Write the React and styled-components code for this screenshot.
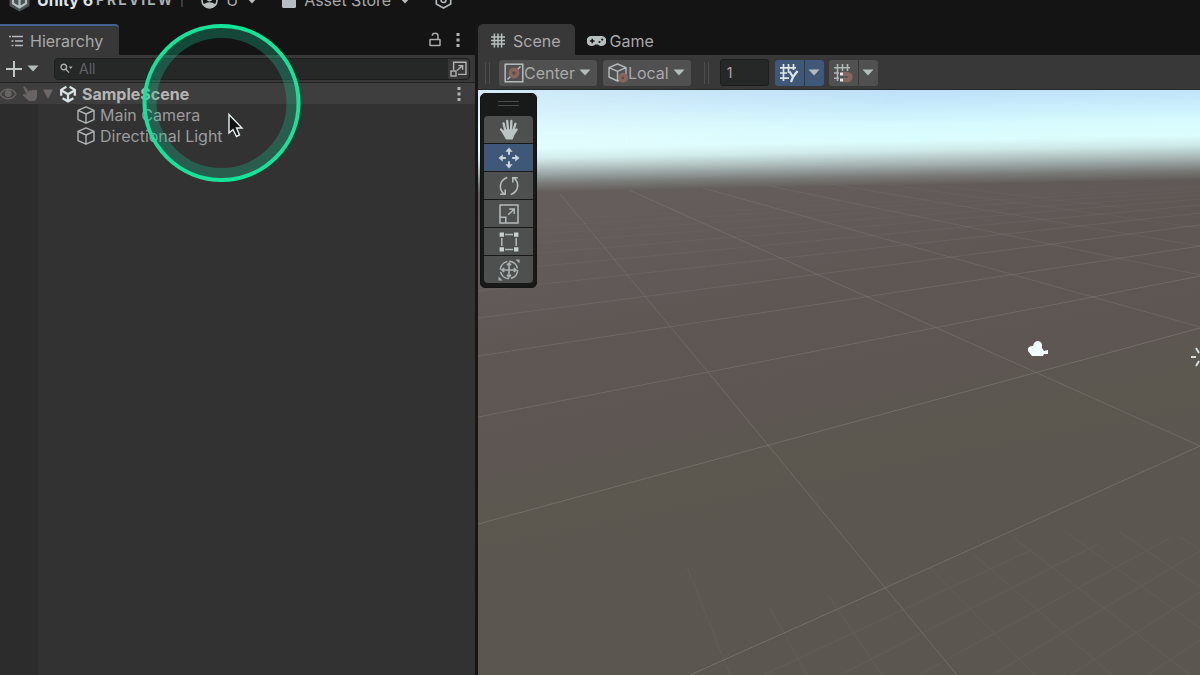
import React, { useState } from 'react';
import styled, { createGlobalStyle } from 'styled-components';

const GlobalStyle = createGlobalStyle`
	* {
		box-sizing: border-box;
	}

	body {
		margin: 0;
		background: #141414;
		color: #a9a9a9;
		font-family: Inter, 'Liberation Sans', sans-serif;
		font-size: 16px;
		line-height: 20px;
		overflow: hidden;
	}

	button, input, select {
		font: inherit;
		color: inherit;
		border: none;
		outline: none;
		padding: 0;
		margin: 0;
		background: none;
	}

	svg {
		display: block;
		flex: none;
	}
`;

const Editor = styled.div`
	display: flex;
	flex-direction: column;
	min-height: 100vh;
	position: relative;
`;

const TopBar = styled.header`
	display: flex;
	align-items: center;
	height: 36px;
	margin-top: -12px;
	padding: 0 8px 12px;
	background: #141414;
`;

const Brand = styled.span`
	margin-left: 6px;
	font-weight: 700;
	color: #dfe5e5;
`;

const Channel = styled.span`
	margin-left: 3px;
	font-size: 14px;
	font-weight: 700;
	letter-spacing: 2px;
	color: #a9b0b0;
`;

const Divider = styled.span`
	width: 2px;
	height: 14px;
	margin: 0 18px 0 7px;
	background: #3c3c3c;
`;

const TopButton = styled.button`
	display: flex;
	align-items: center;
	gap: 8px;
	margin-right: 24px;
`;

const Panels = styled.main`
	flex: 1;
	display: grid;
	grid-template-columns: 478px 1fr;
`;

const Panel = styled.section`
	display: flex;
	flex-direction: column;
	min-width: 0;
`;

const HierarchyPanel = styled(Panel)`
	border-right: 3px solid #161616;
`;

const TabBar = styled.div`
	display: flex;
	align-items: stretch;
	height: 31px;
`;

const Tab = styled.button`
	display: flex;
	align-items: center;
	gap: ${(props) => (props.$focused ? 6 : 8)}px;
	padding: 0 ${(props) => (props.$focused ? 16 : 14)}px 0 ${(props) => (props.$focused ? 9 : 13)}px;
	border-top: 2px solid ${(props) => (props.$focused ? '#42618c' : 'transparent')};
	border-radius: ${(props) => (props.$focused ? '0 4px 0 0' : '5px 5px 0 0')};
	background: ${(props) => (props.$active ? '#383838' : 'transparent')};
`;

const PlainTab = styled(Tab)`
	gap: 4px;
	padding: 0 12px;
`;

const TabActions = styled.div`
	display: flex;
	align-items: center;
	gap: 15px;
	margin-left: auto;
	padding-right: 15px;
`;

const IconButton = styled.button`
	display: flex;
	align-items: center;
	gap: 4px;
`;

const HierarchyTools = styled.div`
	display: flex;
	align-items: center;
	gap: 15px;
	height: 28px;
	padding: 0 5px;
	background: #383838;
	border-bottom: 1px solid #222222;
`;

const SearchBox = styled.div`
	flex: 1;
	display: flex;
	align-items: center;
	height: 22px;
	border: 1px solid #1e1e1e;
	border-radius: 4px;
	background: #262827;
`;

const SearchLabel = styled.label`
	flex: 1;
	display: flex;
	align-items: center;
	gap: 6px;
	padding-left: 5px;

	input {
		flex: 1;
		min-width: 0;
		font-size: 14px;
	}

	input::placeholder {
		color: #636363;
		opacity: 1;
	}
`;

const PickerButton = styled(IconButton)`
	justify-content: center;
	width: 21px;
	height: 20px;
	border-radius: 0 4px 4px 0;
	background: #383838;
`;

const Tree = styled.ul`
	flex: 1;
	margin: 0;
	padding: 0;
	list-style: none;
	background: linear-gradient(90deg, #2c2c2c 38px, #323232 38px);
`;

const SceneRow = styled.li`
	display: flex;
	align-items: center;
	height: 21px;
	padding-right: 14px;
	background: #3e3e3e;
	font-weight: 700;
	color: #b5b5b5;
`;

const RowToggles = styled.div`
	display: flex;
	align-items: center;
	gap: 5px;
	margin-right: 6px;
`;

const RowName = styled.span`
	flex: 1;
	margin-left: 5px;
`;

const ObjectRow = styled.li`
	display: flex;
	align-items: center;
	height: 21px;
	padding-left: 77px;
	color: #9c9c9c;
`;

const SceneTools = styled.div`
	display: flex;
	align-items: center;
	height: 35px;
	padding: 1px 7px 0;
	background: #383838;
	border-bottom: 1px solid #26292a;
`;

const Grip = styled.span`
	width: 5px;
	height: 22px;
	margin-right: ${(props) => props.$after}px;
	border: 1px solid #4c4c4c;
	border-width: 0 1px;
`;

const SelectBox = styled.label`
	display: flex;
	align-items: center;
	height: 26px;
	margin-right: ${(props) => props.$after}px;
	padding: 0 6px 0 5px;
	border-radius: 3px;
	background: #4f504f;

	select {
		appearance: none;
		field-sizing: content;
		margin-right: 4px;
	}
`;

const SizeInput = styled.input`
	width: 49px;
	height: 27px;
	margin-right: 6px;
	padding: 0 6px;
	border: 1px solid #1c1c1c;
	border-radius: 3px;
	background: #262827;
	font-size: 14px;
`;

const SplitButton = styled.div`
	display: flex;
	gap: 1px;
	height: 26px;
	margin-right: 5px;

	button {
		display: grid;
		place-items: center;
		width: 19px;
		border-radius: 0 3px 3px 0;
		background: ${(props) => (props.$on ? '#3f5878' : '#4f504f')};
	}

	button:first-child {
		width: 29px;
		border-radius: 3px 0 0 3px;
	}
`;

const Viewport = styled.div`
	position: relative;
	flex: 1;
	overflow: hidden;
	background: #5c5750;
`;

const WorldCanvas = styled.svg`
	position: absolute;
	inset: 0;
	width: 100%;
	height: 100%;
`;

const ToolPalette = styled.div`
	position: absolute;
	left: 2px;
	top: 3px;
	display: flex;
	flex-direction: column;
	align-items: center;
	gap: 1px;
	padding: 0 3px 4px;
	border: 1px solid #141414;
	border-radius: 5px;
	background: #181a19;
`;

const PaletteHandle = styled.span`
	width: 21px;
	height: 5px;
	margin: 7px 0 9px;
	border: 1px solid #4a4c4b;
	border-width: 1px 0;
`;

const ToolButton = styled.button`
	display: grid;
	place-items: center;
	width: 49px;
	height: 27px;
	background: ${(props) => (props.$on ? '#3f5878' : '#4d504f')};

	&:first-of-type {
		border-radius: 4px 4px 0 0;
	}

	&:last-of-type {
		border-radius: 0 0 4px 4px;
	}
`;

const Pointer = styled.svg`
	position: absolute;
	left: 140px;
	top: 22px;
	pointer-events: none;
`;

const Caret = ({ color = '#b4bcbc' }) => (
	<svg width="12" height="7" viewBox="0 0 12 7" aria-hidden="true">
		<path d="M0.5 0.5h11L6 6.5z" fill={color} />
	</svg>
);

const KebabIcon = () => (
	<svg width="4" height="14" viewBox="0 0 4 14" fill="#b4b4b4" aria-hidden="true">
		<rect x="0.5" width="3" height="3" />
		<rect x="0.5" y="5.5" width="3" height="3" />
		<rect x="0.5" y="11" width="3" height="3" />
	</svg>
);

const HierarchyIcon = () => (
	<svg width="15" height="12" viewBox="0 0 15 12" fill="none" stroke="#b9b9b9" strokeWidth="1.5" aria-hidden="true">
		<path d="M0 1.5h2M3 1.5H14M2.5 6h2M6 6h8M2.5 10.5h2M6 10.5h8" />
	</svg>
);

const LockIcon = () => (
	<svg width="12" height="15" viewBox="0 0 12 15" fill="none" stroke="#aaaaaa" strokeWidth="1.5" aria-hidden="true">
		<rect x="1" y="7.5" width="10" height="6" rx="0.5" />
		<path d="M3.3 3.8C3.3 0.5 9 0.5 9 3.8V7.5" />
	</svg>
);

const UnityMark = () => (
	<svg width="18" height="18" viewBox="0 0 18 18" fill="none" stroke="#d6e2e4" strokeWidth="2.3" aria-hidden="true">
		<path d="M7.4 1.8L2.2 4.8V10.8M10.6 1.8L15.8 4.8V10.8M3.6 13.2L9 16.3L14.4 13.2" />
		<path d="M9 9.2V16M9 9.2L2.6 5.4M9 9.2L15.4 5.4" />
	</svg>
);

const CubeIcon = () => (
	<svg width="18" height="18" viewBox="0 0 18 18" fill="none" stroke="#b0b5b5" strokeWidth="1.4" strokeLinejoin="round" aria-hidden="true">
		<path d="M9 0.9L17 4.3V13.6L9 17.2L1 13.6V4.3zM1 4.3L9 8L17 4.3M9 8V17.2" />
	</svg>
);

const SearchIcon = () => (
	<svg width="13" height="11" viewBox="0 0 13 11" fill="none" stroke="#adadad" strokeWidth="1.4" aria-hidden="true">
		<circle cx="3.8" cy="4" r="2.8" />
		<path d="M5.9 6.2L9 9.6" />
		<path d="M8.8 3.6h3.8L10.7 6z" fill="#adadad" stroke="none" />
	</svg>
);

const PickerIcon = () => (
	<svg width="17" height="16" viewBox="0 0 17 16" fill="none" stroke="#b4b4b4" strokeWidth="1.4" aria-hidden="true">
		<path d="M3.6 9V1.2H16V13.4H8" />
		<rect x="1" y="10" width="5" height="5" />
		<path d="M7 9.6L12.4 4.8M8.4 4.6h4.2v4.2" />
	</svg>
);

const EyeIcon = () => (
	<svg width="17" height="14" viewBox="0 0 17 14" fill="none" stroke="#686464" strokeWidth="1.5" aria-hidden="true">
		<path d="M0.5 7C4 0.8 12.5 0.8 16 7C12.5 13.2 4 13.2 0.5 7z" />
		<circle cx="8.2" cy="6.5" r="2.8" fill="#686464" />
	</svg>
);

const PickIcon = () => (
	<svg width="16" height="16" viewBox="0 0 16 16" aria-hidden="true">
		<path d="M1 0.8L3 0.6L7 6L8 3.8L9.4 4.8L11 3.4L12.2 4.4L13.6 3.2L15 4.8V12L12.5 15H7.2L0.8 9.6L1.6 7.8L4.6 8.8z" fill="#686464" />
	</svg>
);

const SceneGridIcon = () => (
	<svg width="14" height="15" viewBox="0 0 14 15" fill="none" stroke="#b8bfbf" strokeWidth="1.5" aria-hidden="true">
		<path d="M3.4 0.5V14.5M7 0.5V14.5M10.6 0.5V14.5M0 4H14M0 7.5H14M0 11H14" />
	</svg>
);

const GamepadIcon = () => (
	<svg width="19" height="12" viewBox="0 0 19 12" aria-hidden="true">
		<path d="M5.4 1H13.6A5 5 0 1 1 10.8 9.4H8.2A5 5 0 1 1 5.4 1z" fill="#b8bfbf" />
		<path d="M5.2 3.7V8.3M2.9 6H7.5" stroke="#141414" strokeWidth="1.5" />
		<circle cx="12.5" cy="7" r="1.1" fill="#141414" />
		<circle cx="15.2" cy="4.6" r="1.1" fill="#141414" />
	</svg>
);

const PivotIcon = () => (
	<svg width="20" height="20" viewBox="0 0 20 20" aria-hidden="true">
		<rect x="1.2" y="1.2" width="17.6" height="17.6" fill="none" stroke="#b6bcbc" strokeWidth="1.5" />
		<path d="M3.5 16.5L7 13M13 7L16.5 3.5" stroke="#b6bcbc" strokeWidth="1.5" />
		<circle cx="10" cy="10" r="3.6" fill="#5b4a46" stroke="#86665e" strokeWidth="3.8" />
	</svg>
);

const LocalIcon = () => (
	<svg width="20" height="20" viewBox="0 0 20 20" fill="none" aria-hidden="true">
		<path d="M9.5 1L18 4.6V14L9.5 18L1 14V4.6zM1 4.6L9.5 8.4L18 4.6M9.5 8.4V18" stroke="#b6bcbc" strokeWidth="1.4" strokeLinejoin="round" />
		<circle cx="15" cy="14.8" r="3.2" fill="#5b4a46" stroke="#86665e" strokeWidth="3.6" />
	</svg>
);

const GridAxisIcon = () => (
	<svg width="20" height="20" viewBox="0 0 20 20" fill="none" stroke="#dce6ea" strokeWidth="1.7" aria-hidden="true">
		<path d="M4.5 1V18M9.5 1V10M14.5 1V7M1 4.8H17M1 10H8M1 15.2H10" />
		<path d="M10.5 8.5L14 14L18.5 8M14 14L12 19" strokeWidth="2.2" />
	</svg>
);

const GridSnapIcon = () => (
	<svg width="20" height="20" viewBox="0 0 20 20" fill="none" stroke="#b0b6b6" strokeWidth="1.6" aria-hidden="true">
		<path d="M4.5 1V18M9.5 1V8M14.5 1V8M1 4.8H17M1 10H6M1 15.2H6" />
		<path d="M10 11H14.4A3 3 0 0 1 14.4 17H10" stroke="#86665e" strokeWidth="4.6" />
		<path d="M7 11h3M7 17h3" stroke="#e4eaea" strokeWidth="3" />
	</svg>
);

const HandIcon = () => (
	<svg width="20" height="21" viewBox="0 0 20 21" aria-hidden="true">
		<path
			d="M6.2 11.5L4.6 4.4M9 10.5L8.2 2M12 10.5L12.4 2M14.4 11.5L16.4 4.8M5.6 15L2 10.4"
			stroke="#bcc3c3"
			strokeWidth="2.3"
			strokeLinecap="round"
		/>
		<path d="M5 10.2H15.6L18 9.2L19 10.4L15.4 16L13.6 20.4H7L3.4 14z" fill="#bcc3c3" />
	</svg>
);

const MoveIcon = () => (
	<svg width="22" height="22" viewBox="0 0 22 22" fill="#ccd5da" aria-hidden="true">
		<path d="M11 0.5L14.6 4.8H12V7.8H10V4.8H7.4zM11 21.5L7.4 17.2H10V14.2H12V17.2H14.6zM0.5 11L4.8 7.4V10H7.8V12H4.8V14.6zM21.5 11L17.2 14.6V12H14.2V10H17.2V7.4z" />
	</svg>
);

const RotateIcon = () => (
	<svg width="20" height="20" viewBox="0 0 20 20" fill="none" stroke="#b4baba" strokeWidth="1.6" aria-hidden="true">
		<path d="M8.2 1.6C0 4.4-0.4 13.6 5 17.8M1.2 18.2H6.2V13.4" />
		<path d="M11.8 18.4C20 15.6 20.4 6.4 15 2.2M18.8 1.8H13.8V6.6" />
	</svg>
);

const ScaleIcon = () => (
	<svg width="20" height="20" viewBox="0 0 20 20" fill="none" stroke="#b4baba" strokeWidth="1.5" aria-hidden="true">
		<path d="M1 1H19V19H1zM1 13.2H6.8V19M9.2 10.8L15 5.2M10.2 5H15.2V10" />
	</svg>
);

const RectIcon = () => (
	<svg width="20" height="20" viewBox="0 0 20 20" aria-hidden="true">
		<path d="M6 2.5H14M6 17.5H14M2.8 6V14M17.2 6V14" stroke="#b4baba" strokeWidth="1.5" />
		<path d="M0.6 0.4h4.4v4.4h-4.4zM15 0.4h4.4v4.4h-4.4zM0.6 15.2h4.4v4.4h-4.4zM15 15.2h4.4v4.4h-4.4z" fill="#c8d0d0" />
	</svg>
);

const TransformIcon = () => (
	<svg width="22" height="22" viewBox="0 0 22 22" fill="none" stroke="#abb1b1" strokeWidth="1.6" aria-hidden="true">
		<circle cx="11" cy="11" r="8.6" strokeDasharray="11.5 2" />
		<path d="M11 4V18M4 11H18M9 6.2L11 4L13 6.2M9 15.8L11 18L13 15.8M6.2 9L4 11L6.2 13M15.8 9L18 11L15.8 13" />
		<path d="M17.5 0.5H21.5V4.5zM0.5 17.5V21.5H4.5z" fill="#abb1b1" stroke="none" />
	</svg>
);

const tools = [
	{ name: 'Hand', Icon: HandIcon },
	{ name: 'Move', Icon: MoveIcon },
	{ name: 'Rotate', Icon: RotateIcon },
	{ name: 'Scale', Icon: ScaleIcon },
	{ name: 'Rect', Icon: RectIcon },
	{ name: 'Transform', Icon: TransformIcon },
];

// Major lines as [x1, y1, x2, y2, opacity], fanning out of the two vanishing points
const majorLines = [
	[560, 194, 708, 372, 0.5],
	[708, 372, 957, 675, 0.6],
	[629, 190, 1200, 446, 0.55],
	[703, 188, 1200, 327, 0.45],
	[770, 186, 1200, 275, 0.36],
	[830, 184, 1200, 246, 0.26],
	[890, 185, 1200, 228, 0.18],
	[940, 186, 1200, 217, 0.12],
	[690, 675, 887, 587, 0.75],
	[887, 587, 1200, 446, 0.65],
	[478, 524, 1200, 328, 0.65],
	[478, 417, 1200, 276, 0.55],
	[478, 356, 1200, 246, 0.5],
	[478, 318, 1200, 225, 0.4],
	[478, 291, 1200, 213, 0.3],
	[478, 272, 1200, 205, 0.24],
	[478, 258, 1200, 199, 0.18],
	[478, 247, 1200, 195, 0.14],
	[478, 238, 1200, 191, 0.12],
	[478, 230, 1200, 188, 0.1],
	[478, 223, 1200, 186, 0.08],
];

const minorLines = [
	[930, 568, 1035, 675],
	[972, 553, 1112, 675],
	[1013, 537, 1190, 675],
	[1067, 533, 1200, 628],
	[1120, 532, 1200, 587],
	[1180, 537, 1200, 550],
	[828, 595, 882, 675],
	[770, 608, 807, 675],
	[687, 567, 730, 675],
	[763, 675, 1033, 549],
	[840, 675, 1100, 543],
	[918, 675, 1170, 538],
	[992, 675, 1200, 551],
	[1070, 675, 1200, 592],
	[1147, 675, 1200, 640],
];

const World = () => (
	<WorldCanvas viewBox="478 90 722 585" preserveAspectRatio="xMinYMin slice" aria-hidden="true">
		<defs>
			<linearGradient id="sky" gradientUnits="userSpaceOnUse" x1="838" y1="86" x2="840" y2="186">
				<stop offset="0" stopColor="#b9dcf4" />
				<stop offset="0.2" stopColor="#c6eafb" />
				<stop offset="0.4" stopColor="#d6fafe" />
				<stop offset="0.56" stopColor="#dcfdfd" />
				<stop offset="0.66" stopColor="#cfe9e9" />
				<stop offset="0.79" stopColor="#a6b4b3" />
				<stop offset="0.91" stopColor="#7a7c7a" />
				<stop offset="1" stopColor="#645e5c" />
			</linearGradient>
			<linearGradient id="glow" gradientUnits="userSpaceOnUse" x1="478" y1="0" x2="900" y2="0">
				<stop offset="0" stopColor="#f2ffff" stopOpacity="0.45" />
				<stop offset="1" stopColor="#f2ffff" stopOpacity="0" />
			</linearGradient>
			<linearGradient id="ground" gradientUnits="userSpaceOnUse" x1="760" y1="180" x2="836" y2="560">
				<stop offset="0" stopColor="#645d5b" />
				<stop offset="0.3" stopColor="#5e5754" />
				<stop offset="0.6" stopColor="#5d5652" />
				<stop offset="0.7" stopColor="#5c5850" />
				<stop offset="1" stopColor="#5b564f" />
			</linearGradient>
			<linearGradient id="glowFade" x1="0" y1="0" x2="0" y2="1">
				<stop offset="0" stopColor="#fff" />
				<stop offset="0.6" stopColor="#fff" />
				<stop offset="1" stopColor="#000" />
			</linearGradient>
			<mask id="glowMask">
				<rect x="478" y="90" width="722" height="80" fill="url(#glowFade)" />
			</mask>
		</defs>
		<rect x="478" y="90" width="722" height="585" fill="url(#ground)" />
		<path d="M478 90H1200V179L478 193z" fill="url(#sky)" />
		<rect x="478" y="90" width="722" height="80" fill="url(#glow)" mask="url(#glowMask)" />
		<g stroke="#7b7976">
			{majorLines.map(([x1, y1, x2, y2, opacity]) => (
				<line key={`${x1}-${y1}`} x1={x1} y1={y1} x2={x2} y2={y2} opacity={opacity} />
			))}
		</g>
		<g stroke="#7b7976" opacity="0.2">
			{minorLines.map(([x1, y1, x2, y2]) => (
				<line key={`${x1}-${y1}`} x1={x1} y1={y1} x2={x2} y2={y2} />
			))}
		</g>
		<path d="M1032 356L1028 351Q1027 346 1033 346Q1034 341 1038 341Q1043 342 1042 348L1044 351L1048 350V354L1044 354L1043 356z" fill="#f0fbfc" />
		<path
			d="M1191 357H1196M1196 348L1199 353M1196 366L1199 361"
			stroke="#d5dcdc"
			strokeWidth="2"
		/>
	</WorldCanvas>
);

function App() {
	const [tool, setTool] = useState('Move');
	const [query, setQuery] = useState('');
	const [size, setSize] = useState('1');

	return (
		<Editor>
			<GlobalStyle />
			<TopBar>
				<svg width="23" height="23" viewBox="0 0 23 23" aria-hidden="true">
					<path d="M11.5 0.5L21.5 6V17L11.5 22.5L1.5 17V6z" fill="#4a5254" />
					<path d="M11.5 9V19M5 8V14.5L11.5 18.5L18 14.5V8M6 7.5L11.5 11L17 7.5" fill="none" stroke="#b4bdbe" strokeWidth="2.2" />
				</svg>
				<Brand>Unity 6</Brand>
				<Channel>PREVIEW</Channel>
				<Divider />
				<TopButton>
					<svg width="17" height="17" viewBox="0 0 17 17" aria-hidden="true">
						<circle cx="8.5" cy="8.5" r="7.5" fill="none" stroke="#b8bfbf" strokeWidth="1.6" />
						<path d="M2.5 12.2Q8.5 8.4 14.5 12.2L12 15.4H5z" fill="#b8bfbf" />
						<circle cx="8.5" cy="6.4" r="3" fill="#b8bfbf" />
					</svg>
					U
					<Caret />
				</TopButton>
				<TopButton>
					<svg width="14" height="15" viewBox="0 0 14 15" aria-hidden="true">
						<rect width="14" height="15" rx="1.5" fill="#b5bfc1" />
					</svg>
					Asset Store
					<Caret />
				</TopButton>
				<TopButton aria-label="Settings">
					<svg width="17" height="18" viewBox="0 0 17 18" fill="none" stroke="#b0b6b6" strokeWidth="1.7" aria-hidden="true">
						<path d="M8.5 1L15.7 5V13L8.5 17L1.3 13V5z" />
						<circle cx="8.5" cy="9" r="2.5" />
					</svg>
				</TopButton>
			</TopBar>
			<Panels>
				<HierarchyPanel>
					<TabBar>
						<Tab $active $focused>
							<HierarchyIcon />
							Hierarchy
						</Tab>
						<TabActions>
							<IconButton aria-label="Lock">
								<LockIcon />
							</IconButton>
							<IconButton aria-label="Panel menu">
								<KebabIcon />
							</IconButton>
						</TabActions>
					</TabBar>
					<HierarchyTools>
						<IconButton aria-label="Create">
							<svg width="18" height="18" viewBox="0 0 18 18" stroke="#c0c6c6" strokeWidth="2" aria-hidden="true">
								<path d="M9 1V17M1 9H17" />
							</svg>
							<Caret />
						</IconButton>
						<SearchBox>
							<SearchLabel>
								<SearchIcon />
								<input
									aria-label="Search hierarchy"
									placeholder="All"
									value={query}
									onChange={(e) => setQuery(e.target.value)}
								/>
							</SearchLabel>
							<PickerButton aria-label="Open search window">
								<PickerIcon />
							</PickerButton>
						</SearchBox>
					</HierarchyTools>
					<Tree>
						<SceneRow>
							<RowToggles>
								<IconButton aria-label="Visibility">
									<EyeIcon />
								</IconButton>
								<IconButton aria-label="Pickability">
									<PickIcon />
								</IconButton>
								<IconButton aria-label="Collapse">
									<svg width="10" height="10" viewBox="0 0 10 10" aria-hidden="true">
										<path d="M0 0.5H10L5 10z" fill="#6d6868" />
									</svg>
								</IconButton>
							</RowToggles>
							<UnityMark />
							<RowName>SampleScene</RowName>
							<IconButton aria-label="Scene menu">
								<KebabIcon />
							</IconButton>
						</SceneRow>
						<ObjectRow>
							<CubeIcon />
							<RowName>Main Camera</RowName>
						</ObjectRow>
						<ObjectRow>
							<CubeIcon />
							<RowName>Directional Light</RowName>
						</ObjectRow>
					</Tree>
				</HierarchyPanel>
				<Panel>
					<TabBar>
						<Tab $active>
							<SceneGridIcon />
							Scene
						</Tab>
						<PlainTab>
							<GamepadIcon />
							Game
						</PlainTab>
					</TabBar>
					<SceneTools>
						<Grip $after={9} />
						<SelectBox $after={6}>
							<PivotIcon />
							<select aria-label="Handle position">
								<option>Center</option>
							</select>
							<Caret />
						</SelectBox>
						<SelectBox $after={13}>
							<LocalIcon />
							<select aria-label="Handle rotation">
								<option>Local</option>
							</select>
							<Caret />
						</SelectBox>
						<Grip $after={11} />
						<SizeInput aria-label="Grid size" value={size} onChange={(e) => setSize(e.target.value)} />
						<SplitButton $on>
							<button aria-label="Grid axis">
								<GridAxisIcon />
							</button>
							<button aria-label="Grid options">
								<Caret />
							</button>
						</SplitButton>
						<SplitButton>
							<button aria-label="Grid snapping">
								<GridSnapIcon />
							</button>
							<button aria-label="Snapping options">
								<Caret />
							</button>
						</SplitButton>
					</SceneTools>
					<Viewport>
						<World />
						<ToolPalette>
							<PaletteHandle />
							{tools.map(({ name, Icon }) => (
								<ToolButton key={name} aria-label={name} $on={tool === name} onClick={() => setTool(name)}>
									<Icon />
								</ToolButton>
							))}
						</ToolPalette>
					</Viewport>
				</Panel>
			</Panels>
			<Pointer width="162" height="162" viewBox="0 0 162 162" fill="none" aria-hidden="true">
				<circle cx="81.5" cy="81" r="70.5" stroke="#16c894" strokeOpacity="0.3" strokeWidth="11" />
				<circle cx="81.5" cy="81" r="77" stroke="#14e39a" strokeWidth="4" />
				<path d="M89 92.5V111L93 107.5L96.5 114.5L99.5 113L96.5 106H102z" fill="#111111" stroke="#e6f0f0" strokeWidth="1.4" />
			</Pointer>
		</Editor>
	);
}

export default App;
